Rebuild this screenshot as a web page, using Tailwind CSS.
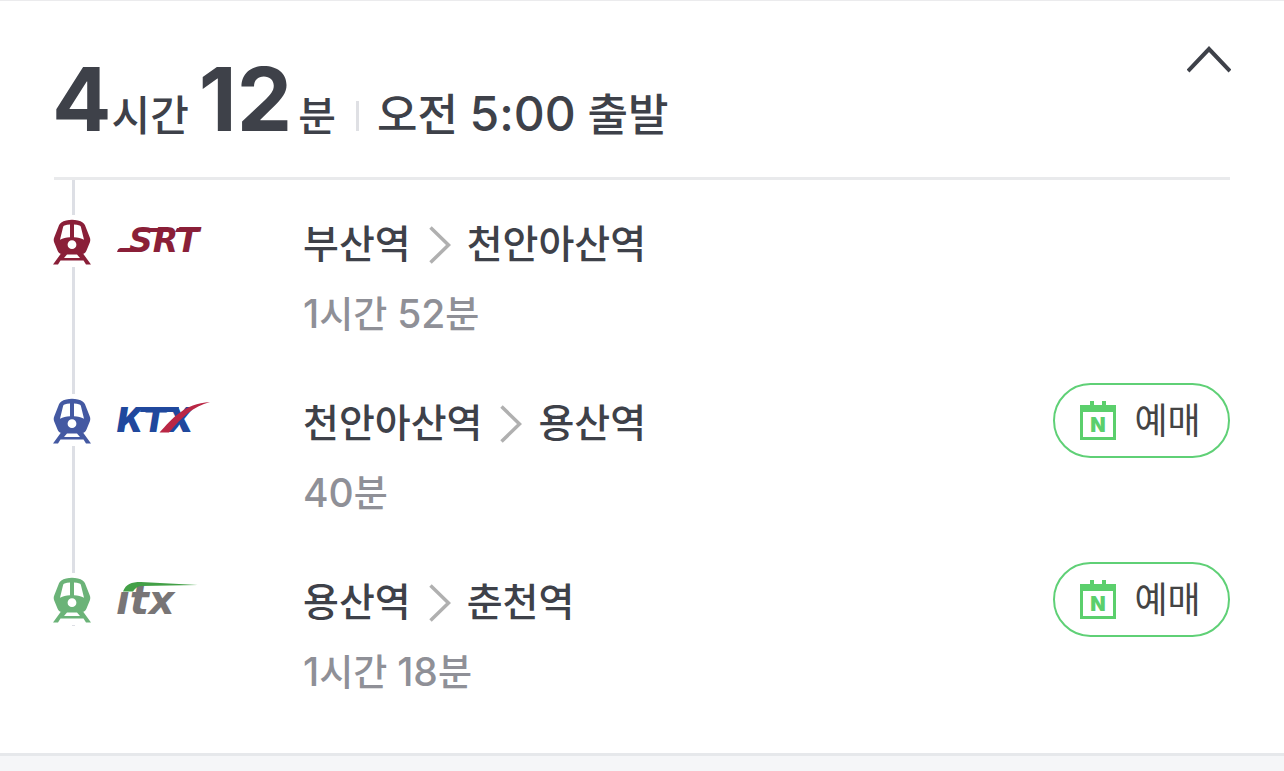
<!DOCTYPE html>
<html lang="ko">
  <head>
    <meta charset="UTF-8" />
    <meta name="viewport" content="width=device-width, initial-scale=1.0" />
    <title>오전 5:00 출발</title>
    <!-- Tailwind -->
    <script src="https://cdn.jsdelivr.net/npm/@tailwindcss/browser@4"></script>
  </head>

  <body
    class="min-h-screen bg-[#f5f6f8] font-['Inter','Noto_Sans_CJK_KR',sans-serif] text-[#3e4149]"
  >
    <!-- Shared icons -->
    <svg class="hidden" xmlns="http://www.w3.org/2000/svg">
      <symbol id="train" viewBox="0 0 38 46">
        <path
          fill="currentColor"
          fill-rule="evenodd"
          d="M8 3.700C11 1.500 15 .7 19 .7s8 .8 11 3c1 .7 1.600 1.500 2 2.600l4.800 12.200c.7 2 .6 3.200 0 5L33.500 31.500c-1 2.300-2 3.500-4.500 3.500H9C6.500 35 5.500 33.800 4.500 31.500l-3.300-8c-.6-1.800-.7-3 0-5L6 6.300c.4-1.100 1-1.900 2-2.600zM17 5.500c-2 .1-3.900.4-5.500.9-.8.300-1.200.7-1.400 1.500L7 20.700c3-1.500 6-2.300 10-2.500zM21 5.500v12.700c4 .2 7 1 10 2.500L27.900 7.900c-.2-.8-.6-1.200-1.400-1.500-1.600-.5-3.500-.8-5.500-.9zM19 21.300a4.400 4.400 0 1 0 0 8.800 4.400 4.400 0 0 0 0-8.800z"
        />
        <path
          fill="currentColor"
          fill-rule="evenodd"
          d="M8 34.500h22l8 11h-5L30.500 41.500h-23L5 45.500H0zM14 35.500 11 39h16L24 35.500z"
        />
      </symbol>
      <symbol id="next" viewBox="0 0 22 38">
        <path
          fill="none"
          stroke="currentColor"
          stroke-width="3.500"
          d="M1.500 1.500 19.500 19l-18 17.500"
        />
      </symbol>
      <symbol id="calendar" viewBox="0 0 36 39">
        <path
          fill="currentColor"
          fill-rule="evenodd"
          d="M0 4h10V0h4v4h8V0h4v4h10v35H0zM3 11v25h30V11z"
        />
      </symbol>
    </svg>

    <main class="border-t border-b-3 border-t-[#ebebed] border-b-[#e6e8eb] bg-white px-[54px] pb-[55px]">
      <header class="flex h-[179px] items-start justify-between border-b-3 border-[#e9eaec]">
        <h1 class="-ml-0.5 flex items-baseline pt-11">
          <span class="text-[88px] leading-[108px] font-bold">4</span>
          <span class="mr-2.5 text-[42px] leading-[60px] font-medium">시간</span>
          <span class="text-[88px] leading-[108px] font-bold">12</span>
          <span class="ml-1.5 text-[41px] leading-[60px] font-medium">분</span>
          <span class="ml-5 h-[30px] w-[3px] bg-[#dfe0e4]"></span>
          <span class="ml-[18px] text-[44px] leading-[60px] font-medium"
            >오전 <span class="text-[48px]">5:00</span> 출발</span
          >
        </h1>
        <button type="button" class="-mr-px pt-11" aria-label="접기">
          <svg class="h-7 w-11" viewBox="0 0 44 28" fill="none">
            <path d="M1 26 22 4l21 22" stroke="#3e4149" stroke-width="4" />
          </svg>
        </button>
      </header>

      <div class="flex h-[39px] w-[39px] justify-center pb-1">
        <span class="w-[3px] bg-[#dddfe5]"></span>
      </div>

      <ol>
        <!-- SRT -->
        <li class="flex">
          <div class="-ml-px flex w-10 flex-col items-center">
            <svg class="h-[46px] w-[38px] self-start text-[#8a1f38]"><use href="#train" /></svg>
            <span class="mt-0.5 mb-1 w-[3px] flex-1 bg-[#dddfe5]"></span>
          </div>
          <div class="w-[210px] pl-6">
            <svg class="h-12 w-28 overflow-visible" viewBox="0 -4 112 48" role="img" aria-label="SRT">
              <g fill="#8a1f38">
                <text x="12" y="29" class="font-['DejaVu_Sans'] text-[33px] font-bold italic">SRT</text>
                <path d="M3.500 25H22l-1 4H0c.5-1.700 1.500-4 3.500-4zM24 5h30v4H22zM60 5h24l-3 4H58z" />
              </g>
            </svg>
          </div>
          <div class="flex-1 pb-[58px]">
            <p class="flex items-center text-[39px] leading-[50px] font-medium">
              부산역
              <svg class="mt-0.5 mr-4 ml-[18px] h-[38px] w-[22px] text-[#b0b0b0]"><use href="#next" /></svg>
              천안아산역
            </p>
            <p class="mt-5 text-[37px] leading-[50px] font-medium text-[#8f9097]">
              <span class="text-[39px]">1</span>시간 <span class="text-[39px]">52</span>분
            </p>
          </div>
        </li>

        <!-- KTX -->
        <li class="flex">
          <div class="-ml-px flex w-10 flex-col items-center">
            <svg class="h-[46px] w-[38px] self-start text-[#4459a2]"><use href="#train" /></svg>
            <span class="mt-0.5 mb-1 w-[3px] flex-1 bg-[#dddfe5]"></span>
          </div>
          <div class="w-[210px] pl-6">
            <svg class="h-12 w-28 overflow-visible" viewBox="0 -4 112 48" role="img" aria-label="KTX">
              <text x="0" y="30" fill="#20489d" class="text-[34px] font-black italic">KTX</text>
              <path d="M25 5h37l-2 5H23z" fill="#20489d" />
              <path
                d="M42.500 30.500C55 17 67 1.500 93 0 76 4.500 65 15 52 30.500z"
                fill="#ba2745"
              />
            </svg>
          </div>
          <div class="flex-1 pb-[58px]">
            <p class="flex items-center text-[39px] leading-[50px] font-medium">
              천안아산역
              <svg class="mt-0.5 mr-4 ml-[18px] h-[38px] w-[22px] text-[#b0b0b0]"><use href="#next" /></svg>
              용산역
            </p>
            <p class="mt-5 text-[37px] leading-[50px] font-medium text-[#8f9097]">
              <span class="text-[39px]">40</span>분
            </p>
          </div>
          <button
            type="button"
            class="-mt-[15px] flex h-[75px] w-[177px] items-center justify-center gap-[18px] rounded-full border-2 border-[#5fd076] pr-0.5 text-[36px] text-[#444]"
          >
            <svg class="h-[39px] w-9 text-[#5bcf6c]" viewBox="0 0 36 39">
              <use href="#calendar" />
              <text x="18" y="31" text-anchor="middle" fill="currentColor" class="text-[20px] font-black">N</text>
            </svg>
            예매
          </button>
        </li>

        <!-- ITX -->
        <li class="flex">
          <div class="-ml-px flex w-10 flex-col items-center">
            <svg class="h-[46px] w-[38px] self-start text-[#6bb378]"><use href="#train" /></svg>
            <span class="mt-0.5 h-px w-[3px] bg-[#dddfe5]"></span>
          </div>
          <div class="w-[210px] pl-6">
            <svg class="h-12 w-28 overflow-visible" viewBox="0 -4 112 48" role="img" aria-label="itx">
              <!-- dotless i: the green roof line stands in for its dot -->
              <text x="-1" y="33" fill="#787576" class="font-['DejaVu_Sans'] text-[40px] font-bold italic">ıtx</text>
              <path
                d="M6 10.500C9 3 14 1 24 1l57 3L25 5c-4 0-7 2-9 5.500z"
                fill="#43a047"
              />
            </svg>
          </div>
          <div class="flex-1">
            <p class="flex items-center text-[39px] leading-[50px] font-medium">
              용산역
              <svg class="mt-0.5 mr-4 ml-[18px] h-[38px] w-[22px] text-[#b0b0b0]"><use href="#next" /></svg>
              춘천역
            </p>
            <p class="mt-5 text-[37px] leading-[50px] font-medium text-[#8f9097]">
              <span class="text-[39px]">1</span>시간 <span class="text-[39px]">18</span>분
            </p>
          </div>
          <button
            type="button"
            class="-mt-[15px] flex h-[75px] w-[177px] items-center justify-center gap-[18px] rounded-full border-2 border-[#5fd076] pr-0.5 text-[36px] text-[#444]"
          >
            <svg class="h-[39px] w-9 text-[#5bcf6c]" viewBox="0 0 36 39">
              <use href="#calendar" />
              <text x="18" y="31" text-anchor="middle" fill="currentColor" class="text-[20px] font-black">N</text>
            </svg>
            예매
          </button>
        </li>
      </ol>
    </main>
  </body>
</html>
